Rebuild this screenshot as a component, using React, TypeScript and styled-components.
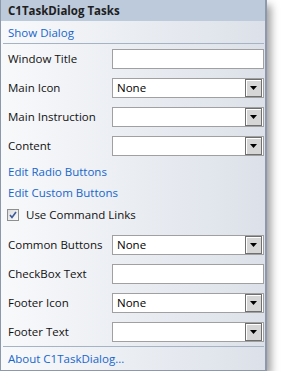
import React from 'react';
import styled, { createGlobalStyle } from 'styled-components';

const GlobalStyle = createGlobalStyle`
  body {
    margin: 0;
    background: #ffffff;
    font-family: "Open Sans", "Noto Sans", sans-serif;
  }
`;

type Field = { label: string; kind: 'text' | 'select'; value?: string };

const topFields: Field[] = [
  { label: 'Window Title', kind: 'text' },
  { label: 'Main Icon', kind: 'select', value: 'None' },
  { label: 'Main Instruction', kind: 'select' },
  { label: 'Content', kind: 'select' },
];

const bottomFields: Field[] = [
  { label: 'Common Buttons', kind: 'select', value: 'None' },
  { label: 'CheckBox Text', kind: 'text' },
  { label: 'Footer Icon', kind: 'select', value: 'None' },
  { label: 'Footer Text', kind: 'select' },
];

const FieldRow: React.FC<{ field: Field }> = ({ field }) => (
  <StyledRow>
    <StyledLabel>{field.label}</StyledLabel>
    {field.kind === 'text' ? (
      <StyledTextBox />
    ) : (
      <StyledTextBox>
        <StyledValue>{field.value}</StyledValue>
        <StyledDropButton>
          <svg width="7" height="5" viewBox="0 0 7 5">
            <polygon points="0,0 7,0 3.5,4" fill="#000" />
          </svg>
        </StyledDropButton>
      </StyledTextBox>
    )}
  </StyledRow>
);

const App: React.FC = () => (
  <>
    <GlobalStyle />
    <StyledPanel>
      <StyledHeader>C1TaskDialog Tasks</StyledHeader>
      <StyledLinkRow height={22}>
        <StyledLink>Show Dialog</StyledLink>
      </StyledLinkRow>
      <StyledSeparator />
      {topFields.map((f) => (
        <FieldRow key={f.label} field={f} />
      ))}
      <StyledLinkRow height={22}>
        <StyledLink>Edit Radio Buttons</StyledLink>
      </StyledLinkRow>
      <StyledLinkRow height={21}>
        <StyledLink>Edit Custom Buttons</StyledLink>
      </StyledLinkRow>
      <StyledCheckRow>
        <StyledCheckBox>
          <svg width="8" height="8" viewBox="0 0 8 8">
            <path d="M1 4 L3 6.5 L7 1" stroke="#3d5a9a" strokeWidth="1.6" fill="none" />
          </svg>
        </StyledCheckBox>
        <StyledText>Use Command Links</StyledText>
      </StyledCheckRow>
      {bottomFields.map((f) => (
        <FieldRow key={f.label} field={f} />
      ))}
      <StyledSeparator />
      <StyledLinkRow height={23}>
        <StyledLink>About C1TaskDialog...</StyledLink>
      </StyledLinkRow>
    </StyledPanel>
  </>
);

export default App;

const StyledPanel = styled.div`
  width: 264px;
  border: 1px solid #8d99ab;
  border-top: none;
  border-right-width: 2px;
  background: linear-gradient(to right, #f8f9fb, #dce1e9);
  box-shadow: 4px 5px 8px rgba(0, 0, 0, 0.38);
  display: flex;
  flex-direction: column;
`;

const StyledHeader = styled.div`
  height: 21px;
  background: #bccadb;
  padding-left: 7px;
  display: flex;
  align-items: center;
  font-size: 11.5px;
  font-weight: 700;
  color: #1e1e1e;
`;

const StyledLinkRow = styled.div<{ height: number }>`
  height: ${(p) => p.height}px;
  display: flex;
  align-items: center;
  padding-left: 7px;
`;

const StyledLink = styled.span`
  font-size: 11.5px;
  color: #1666cc;
`;

const StyledSeparator = styled.div`
  height: 1px;
  margin: 0 1px 0 2px;
  background: #a5b3c5;
`;

const StyledRow = styled.div`
  height: 29px;
  display: flex;
  align-items: center;
  padding-left: 7px;
`;

const StyledLabel = styled.span`
  width: 104px;
  font-size: 11.5px;
  color: #111;
`;

const StyledText = styled.span`
  font-size: 11.5px;
  color: #111;
`;

const StyledTextBox = styled.div`
  box-sizing: border-box;
  width: 152px;
  height: 20px;
  border: 1px solid #a0a0a0;
  background: #fff;
  display: flex;
  align-items: center;
  padding: 0 1px 0 4px;
`;

const StyledValue = styled.span`
  flex: 1;
  font-size: 11.5px;
  color: #000;
`;

const StyledDropButton = styled.div`
  box-sizing: border-box;
  width: 17px;
  height: 18px;
  border: 1px solid #6f6f6f;
  box-shadow: inset 1px 1px 0 #fff;
  background: #d6d6d6;
  display: flex;
  align-items: center;
  justify-content: center;
  padding-top: 2px;
`;

const StyledCheckRow = styled.div`
  height: 27px;
  box-sizing: border-box;
  padding: 0 0 4px 6px;
  display: flex;
  align-items: center;
  gap: 7px;
`;

const StyledCheckBox = styled.div`
  box-sizing: border-box;
  width: 12px;
  height: 12px;
  border: 1px solid #8e8f8f;
  background: linear-gradient(135deg, #dcdcdc, #fbfbfb);
  display: flex;
  align-items: center;
  justify-content: center;
`;
